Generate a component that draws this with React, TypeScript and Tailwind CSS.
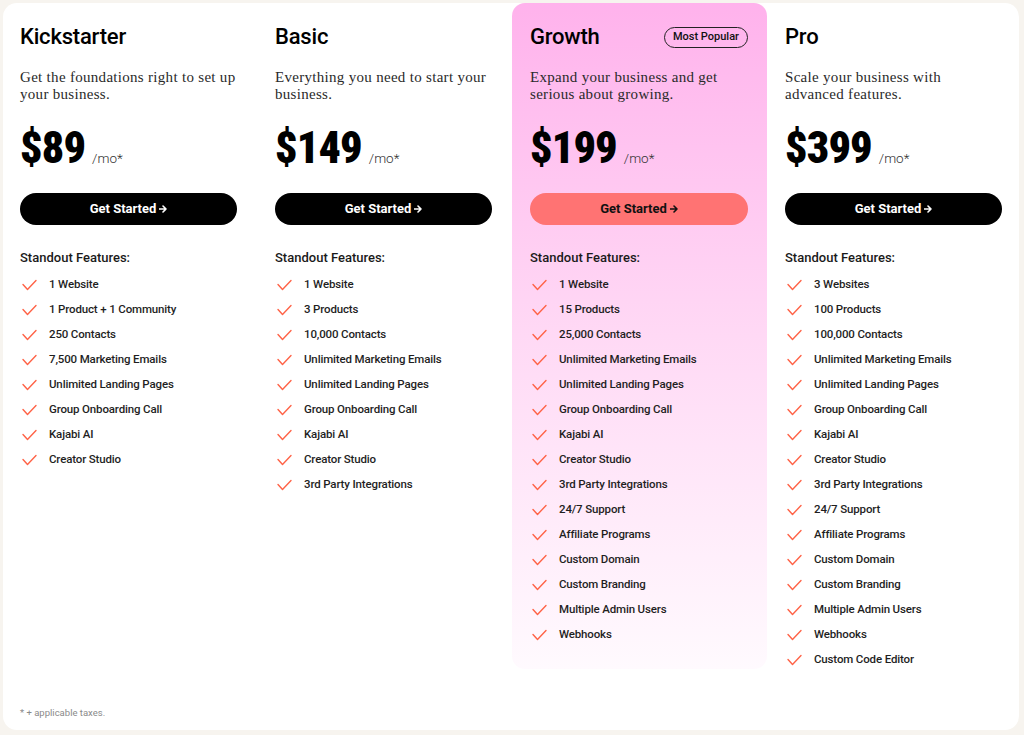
import React from "react";

type Plan = {
  name: string;
  desc: string[];
  price: string;
  features: string[];
  popular?: boolean;
};

const plans: Plan[] = [
  {
    name: "Kickstarter",
    desc: ["Get the foundations right to set up", "your business."],
    price: "$89",
    features: [
      "1 Website",
      "1 Product + 1 Community",
      "250 Contacts",
      "7,500 Marketing Emails",
      "Unlimited Landing Pages",
      "Group Onboarding Call",
      "Kajabi AI",
      "Creator Studio",
    ],
  },
  {
    name: "Basic",
    desc: ["Everything you need to start your", "business."],
    price: "$149",
    features: [
      "1 Website",
      "3 Products",
      "10,000 Contacts",
      "Unlimited Marketing Emails",
      "Unlimited Landing Pages",
      "Group Onboarding Call",
      "Kajabi AI",
      "Creator Studio",
      "3rd Party Integrations",
    ],
  },
  {
    name: "Growth",
    desc: ["Expand your business and get", "serious about growing."],
    price: "$199",
    popular: true,
    features: [
      "1 Website",
      "15 Products",
      "25,000 Contacts",
      "Unlimited Marketing Emails",
      "Unlimited Landing Pages",
      "Group Onboarding Call",
      "Kajabi AI",
      "Creator Studio",
      "3rd Party Integrations",
      "24/7 Support",
      "Affiliate Programs",
      "Custom Domain",
      "Custom Branding",
      "Multiple Admin Users",
      "Webhooks",
    ],
  },
  {
    name: "Pro",
    desc: ["Scale your business with", "advanced features."],
    price: "$399",
    features: [
      "3 Websites",
      "100 Products",
      "100,000 Contacts",
      "Unlimited Marketing Emails",
      "Unlimited Landing Pages",
      "Group Onboarding Call",
      "Kajabi AI",
      "Creator Studio",
      "3rd Party Integrations",
      "24/7 Support",
      "Affiliate Programs",
      "Custom Domain",
      "Custom Branding",
      "Multiple Admin Users",
      "Webhooks",
      "Custom Code Editor",
    ],
  },
];

function Check() {
  return (
    <svg width="15" height="12" viewBox="0 0 15 12" fill="none" className="shrink-0">
      <polyline
        points="1,5.5 5.5,10.5 14,1.5"
        stroke="#ff6347"
        strokeWidth="1.4"
        strokeLinecap="round"
        strokeLinejoin="round"
      />
    </svg>
  );
}

function Arrow() {
  return (
    <svg width="8" height="8" viewBox="0 0 8 8" fill="none" className="ml-[3px]">
      <path d="M0.5 4H7M4 1L7 4L4 7" stroke="currentColor" strokeWidth="1.6" strokeLinecap="round" strokeLinejoin="round" />
    </svg>
  );
}

function Column({ plan }: { plan: Plan }) {
  const pop = !!plan.popular;
  return (
    <div
      className={
        pop
          ? "flex flex-col pt-[20px] pl-[18px] pr-[19px] pb-[22px] -ml-[1px] mr-[1px] rounded-[13px] bg-gradient-to-b from-[#ffb2ec] via-[#ffd9f5] via-50% to-[#fffafe]"
          : "flex flex-col pt-[20px] pl-[17px] pr-[21px] pb-[22px]"
      }
    >
      <div className="flex items-center justify-between h-[28px]">
        <h2 className="text-[22px] leading-[28px] font-medium text-black tracking-[-0.2px] [font-family:Roboto,'Liberation_Sans',sans-serif]">
          {plan.name}
        </h2>
        {pop && (
          <span className="border border-[#222] rounded-full px-[8px] h-[21px] flex items-center text-[11px] font-medium text-[#111] [font-family:Roboto,sans-serif]">
            Most Popular
          </span>
        )}
      </div>
      <p className="mt-[18px] text-[15px] leading-[16.5px] tracking-[0.3px] text-[#2a2a2a] [font-family:'Liberation_Serif','DejaVu_Serif',serif]">
        {plan.desc[0]}
        <br />
        {plan.desc[1]}
      </p>
      <div className="mt-[24px] flex items-baseline gap-[7px]">
        <span className="text-[44px] leading-[44px] font-black text-black tracking-[-0.8px] [font-family:'Liberation_Sans_Narrow','Roboto_Condensed',Roboto,sans-serif]">
          {plan.price}
        </span>
        <span className="text-[13.5px] text-[#333] font-light [font-family:Roboto,sans-serif]">/mo*</span>
      </div>
      <button
        className={
          "mt-[23px] h-[32px] w-full rounded-full flex items-center justify-center text-[13px] font-bold [font-family:Roboto,sans-serif] " +
          (pop ? "bg-[#ff7373] text-[#111]" : "bg-black text-white")
        }
      >
        Get Started
        <Arrow />
      </button>
      <div className="mt-[24px] text-[13px] leading-[18px] font-medium text-[#1a1a1a] [font-family:Roboto,sans-serif]">
        Standout Features:
      </div>
      <ul className="mt-[5px] flex flex-col">
        {plan.features.map((f) => (
          <li key={f} className="h-[25px] flex items-center pl-[2px] gap-[12px]">
            <Check />
            <span className="text-[11.5px] font-medium tracking-[-0.15px] text-[#1f1f1f] [font-family:Roboto,sans-serif]">
              {f}
            </span>
          </li>
        ))}
      </ul>
    </div>
  );
}

export default function App() {
  return (
    <div className="w-[1024px] h-[735px] bg-[#f7f4ef] pt-[3px] pl-[3px] pr-[5px] pb-[5px]">
      <div className="h-full bg-white rounded-[14px] flex flex-col">
        <div className="grid grid-cols-[repeat(4,255px)] items-start">
          {plans.map((p) => (
            <Column key={p.name} plan={p} />
          ))}
        </div>
        <div className="mt-auto pl-[17px] pb-[10px] text-[9.5px] text-[#8a8a8a] [font-family:Roboto,sans-serif]">
          * + applicable taxes.
        </div>
      </div>
    </div>
  );
}
